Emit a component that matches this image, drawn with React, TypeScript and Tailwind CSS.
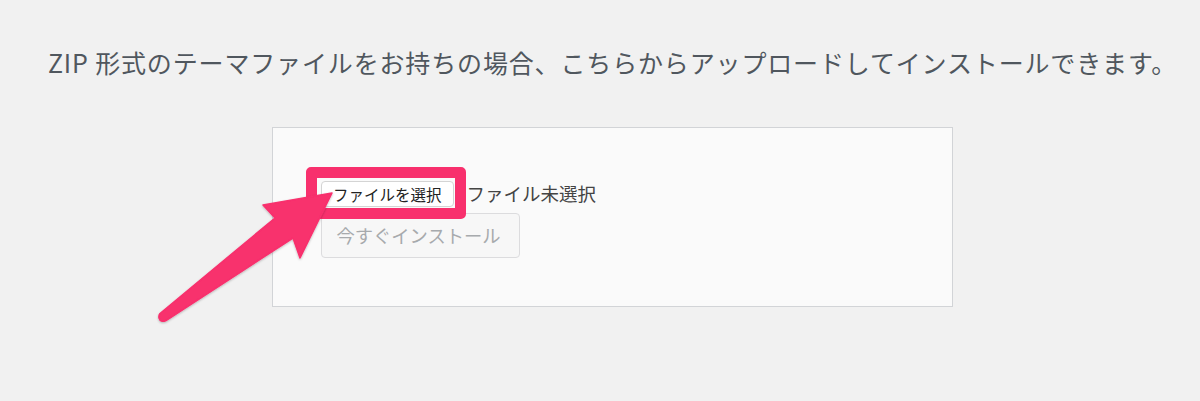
import React from 'react';

const Arrow = () => (
  <svg
    className="absolute left-0 top-0 pointer-events-none"
    width={1200}
    height={401}
    viewBox="0 0 1200 401"
  >
    <defs>
      <filter id="arrowShadow" x="-20%" y="-20%" width="140%" height="140%">
        <feDropShadow dx="0" dy="1" stdDeviation="1.2" floodColor="#000" floodOpacity="0.25" />
      </filter>
    </defs>
    <path
      d="M160 313.5 L275 218 L263 205 L332 193 L300 258 L293 238 L166 320.5 Q160.5 323 159 318 Q158.5 315.5 160 313.5 Z"
      fill="#f8306d"
      stroke="#f8306d"
      strokeWidth={1.5}
      strokeLinejoin="round"
      filter="url(#arrowShadow)"
    />
  </svg>
);

const App = () => {
  return (
    <div
      className="relative w-[1200px] h-[401px] bg-[#f1f1f1] overflow-hidden"
      style={{ fontFamily: '"Noto Sans CJK JP", "Noto Sans", sans-serif' }}
    >
      <p className="pt-[43px] text-center text-[25px] leading-[38px] tracking-[0.85px] text-[#50575e] pl-[25px]">
        ZIP 形式のテーマファイルをお持ちの場合、こちらからアップロードしてインストールできます。
      </p>

      <div className="ml-[272px] mt-[46px] w-[681px] h-[180px] border border-[#d2d4d7] bg-[#fafafa] pl-[48px] pt-[53px]">
        <div className="flex items-center h-[26px]">
          <div className="relative">
            <button className="h-[26px] px-[11px] bg-white border border-[#d4d4d4] rounded-[4px] text-[15.5px] leading-[24px] text-[#222]">
              ファイルを選択
            </button>
            <div className="absolute left-[-15px] top-[-14px] right-[-12px] bottom-[-12px] border-[11px] border-[#f8306d] rounded-[5px]" />
          </div>
          <span className="ml-[13px] text-[18.5px] text-[#444]">ファイル未選択</span>
        </div>
        <button
          disabled
          className="mt-[6px] w-[199px] h-[45px] border border-[#dcdcde] bg-[#f7f7f7] rounded-[4px] text-[18.3px] text-[#a7aaad] text-center pr-[4px]"
        >
          今すぐインストール
        </button>
      </div>

      <Arrow />
    </div>
  );
};

export default App;
